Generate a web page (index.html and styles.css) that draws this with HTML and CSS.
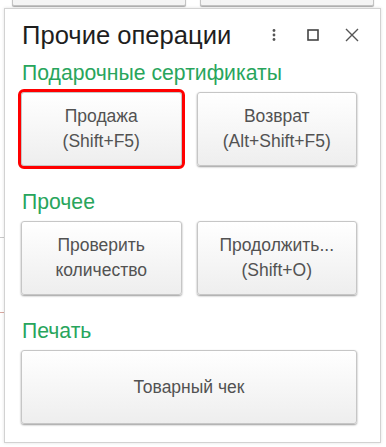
FILE: index.html
```html
<!DOCTYPE html>
<html lang="ru">
<head>
<meta charset="utf-8">
<link rel="stylesheet" href="styles.css">
</head>
<body>
<div class="backdrop">
  <div class="bg-btn bg-btn-a"></div>
  <div class="bg-btn bg-btn-b"></div>
  <div class="bg-line bg-line-a"></div>
  <div class="bg-line bg-line-b"></div>
</div>
<div class="window">
  <div class="header">
    <div class="title">Прочие операции</div>
    <div class="tools">
      <svg class="ico ico-more" width="6" height="14" viewBox="0 0 6 14"><circle cx="3" cy="2.5" r="1.4" fill="#555"/><circle cx="3" cy="7" r="1.4" fill="#555"/><circle cx="3" cy="11.5" r="1.4" fill="#555"/></svg>
      <svg class="ico ico-max" width="12" height="12" viewBox="0 0 12 12"><rect x="1" y="1" width="10" height="10" fill="none" stroke="#444" stroke-width="1.6"/></svg>
      <svg class="ico ico-close" width="14" height="14" viewBox="0 0 14 14"><path d="M1 1 L13 13 M13 1 L1 13" stroke="#555" stroke-width="1.4" fill="none"/></svg>
    </div>
  </div>
  <div class="section">
    <div class="label">Подарочные сертификаты</div>
    <div class="row">
      <div class="btn focused">Продажа<br>(Shift+F5)</div>
      <div class="btn">Возврат<br>(Alt+Shift+F5)</div>
    </div>
  </div>
  <div class="section">
    <div class="label">Прочее</div>
    <div class="row">
      <div class="btn">Проверить<br>количество</div>
      <div class="btn">Продолжить...<br>(Shift+O)</div>
    </div>
  </div>
  <div class="section">
    <div class="label">Печать</div>
    <div class="row">
      <div class="btn wide">Товарный чек</div>
    </div>
  </div>
</div>
</body>
</html>
```
FILE: styles.css
```css
html, body {
  margin: 0;
  padding: 0;
  background: #fff;
  font-family: "Liberation Sans", Arial, sans-serif;
  width: 386px;
  height: 447px;
  overflow: hidden;
}
.backdrop {
  position: absolute;
  inset: 0;
}
.bg-btn {
  position: absolute;
  top: -20px;
  height: 24px;
  border: 1px solid #c4c4c4;
  border-radius: 2px;
  background: #f4f4f4;
  box-shadow: 0 1px 1px #aaa;
}
.bg-btn-a { left: 12px; width: 172px; }
.bg-btn-b { left: 200px; width: 172px; }
.bg-line {
  position: absolute;
  left: 0;
  width: 6px;
  height: 1px;
}
.bg-line-a { top: 237px; background: #c8c8c8; }
.bg-line-b { top: 312px; background: #d8a8a0; }
.window {
  position: absolute;
  left: 4px;
  top: 8px;
  width: 377px;
  height: 435px;
  box-sizing: border-box;
  background: #fff;
  border: 1px solid #d2d2d2;
  box-shadow: 0 0 3px rgba(0,0,0,0.12);
  padding: 0 23px 0 16px;
}
.header {
  display: flex;
  align-items: center;
  justify-content: space-between;
  height: 52px;
  padding-left: 1px;
}
.title {
  font-size: 25.6px;
  color: #1e1e1e;
  padding-top: 1px;
}
.tools {
  display: flex;
  align-items: center;
  margin-right: -2px;
}
.ico { display: block; }
.ico-more { margin-right: 30px; }
.ico-max { margin-right: 26px; }
.label {
  color: #28a55c;
  font-size: 21.2px;
  line-height: 24px;
  padding-left: 1px;
  margin-bottom: 7px;
}
.section { margin-bottom: 24px; }
.row {
  display: flex;
  gap: 15px;
}
.btn {
  flex: 1;
  height: 74px;
  box-sizing: border-box;
  border: 1px solid #c6c6c6;
  border-radius: 3px;
  background: linear-gradient(#ffffff, #eeeeee);
  box-shadow: 0 1px 2px #9a9a9a;
  display: flex;
  align-items: center;
  justify-content: center;
  text-align: center;
  font-size: 17.5px;
  line-height: 25px;
  color: #525252;
}
.btn.focused {
  outline: 3px solid #f00;
  outline-offset: 0;
}
```
